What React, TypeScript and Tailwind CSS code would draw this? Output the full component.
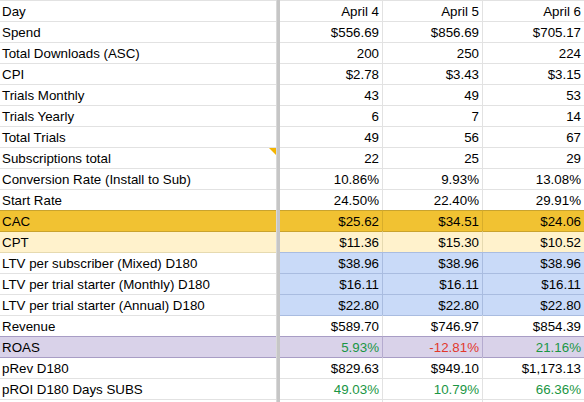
import React from 'react'

type Tone = 'cac' | 'cpt' | 'ltv' | 'roas' | null
type Row = { label: string; values: string[]; tone?: Tone; colors?: string[]; note?: boolean }

const rows: Row[] = [
  { label: 'Day', values: ['April 4', 'April 5', 'April 6'] },
  { label: 'Spend', values: ['$556.69', '$856.69', '$705.17'] },
  { label: 'Total Downloads (ASC)', values: ['200', '250', '224'] },
  { label: 'CPI', values: ['$2.78', '$3.43', '$3.15'] },
  { label: 'Trials Monthly', values: ['43', '49', '53'] },
  { label: 'Trials Yearly', values: ['6', '7', '14'] },
  { label: 'Total Trials', values: ['49', '56', '67'] },
  { label: 'Subscriptions total', values: ['22', '25', '29'], note: true },
  { label: 'Conversion Rate (Install to Sub)', values: ['10.86%', '9.93%', '13.08%'] },
  { label: 'Start Rate', values: ['24.50%', '22.40%', '29.91%'] },
  { label: 'CAC', values: ['$25.62', '$34.51', '$24.06'], tone: 'cac' },
  { label: 'CPT', values: ['$11.36', '$15.30', '$10.52'], tone: 'cpt' },
  { label: 'LTV per subscriber (Mixed) D180', values: ['$38.96', '$38.96', '$38.96'], tone: 'ltv' },
  { label: 'LTV per trial starter (Monthly) D180', values: ['$16.11', '$16.11', '$16.11'], tone: 'ltv' },
  { label: 'LTV per trial starter (Annual) D180', values: ['$22.80', '$22.80', '$22.80'], tone: 'ltv' },
  { label: 'Revenue', values: ['$589.70', '$746.97', '$854.39'] },
  { label: 'ROAS', values: ['5.93%', '-12.81%', '21.16%'], tone: 'roas', colors: ['text-[#1a9644]', 'text-[#e2382c]', 'text-[#1a9644]'] },
  { label: 'pRev D180', values: ['$829.63', '$949.10', '$1,173.13'] },
  { label: 'pROI D180 Days SUBS', values: ['49.03%', '10.79%', '66.36%'], colors: ['text-[#1a9644]', 'text-[#1a9644]', 'text-[#1a9644]'] },
]

const labelBg: Record<string, string> = {
  cac: 'bg-[#f1c232]',
  cpt: 'bg-[#fff2cc]',
  roas: 'bg-[#d9d2e9]',
}

const dataBg: Record<string, string> = {
  cac: 'bg-[#f1c232]',
  cpt: 'bg-[#fff2cc]',
  ltv: 'bg-[#c9daf8]',
  roas: 'bg-[#d9d2e9]',
}

const dataSide: Record<string, string> = {
  cac: 'border-r-[#d8ad2a]',
  cpt: 'border-r-[#e6dab0]',
  ltv: 'border-r-[#a9bce0]',
  roas: 'border-r-[#b5abcf]',
}

const colWidth = ['w-[103px] border-r', 'w-[100px] border-r', 'flex-1']

// top border colour of a row depends on it and the row above
function topBorder(row: Row, prev: Row | undefined, part: 'label' | 'data') {
  const t = row.tone ?? null
  const p = prev?.tone ?? null
  if (t === 'cac' || p === 'cac') return 'border-t-[#c9a32e]'
  if (t === 'roas' || p === 'roas') return 'border-t-[#a89dc5]'
  if (part === 'data' && (t === 'ltv' || p === 'ltv')) return 'border-t-[#a9bce0]'
  if (p === 'cpt') return 'border-t-[#e6dab0]'
  return 'border-t-[#e2e2e2]'
}

export default function App() {
  return (
    <div className="w-[584px] h-[402px] overflow-hidden bg-white text-[13.33px] text-black font-['Liberation_Sans',Arial,sans-serif]">
      {rows.map((row, i) => {
        const prev = rows[i - 1]
        const tone = row.tone ?? ''
        return (
          <div key={row.label} className="flex h-[21px]">
            <div
              className={`relative w-[276px] shrink-0 border-t pl-[2px] pt-[1px] leading-[19px] whitespace-nowrap ${topBorder(row, prev, 'label')} ${labelBg[tone] ?? 'bg-white'}`}
            >
              {row.label}
              {row.note && (
                <span className="absolute right-0 top-0 w-0 h-0 border-t-[7px] border-t-[#f4b400] border-l-[7px] border-l-transparent" />
              )}
            </div>
            <div className="w-[4px] shrink-0 bg-[#c6c6c6] border-l border-l-[#d9d9d9]" />
            {row.values.map((v, j) => (
              <div
                key={j}
                className={`${colWidth[j]} border-t pr-[3px] pt-[1px] leading-[19px] text-right whitespace-nowrap ${topBorder(row, prev, 'data')} ${dataSide[tone] ?? 'border-r-[#e2e2e2]'} ${dataBg[tone] ?? 'bg-white'} ${row.colors?.[j] ?? ''}`}
              >
                {v}
              </div>
            ))}
          </div>
        )
      })}
      <div className="flex h-[21px]">
        <div className="w-[276px] shrink-0 border-t border-t-[#e2e2e2]" />
        <div className="w-[4px] shrink-0 bg-[#c6c6c6] border-l border-l-[#d9d9d9]" />
        <div className="w-[103px] border-t border-r border-t-[#e2e2e2] border-r-[#e2e2e2]" />
        <div className="w-[100px] border-t border-r border-t-[#e2e2e2] border-r-[#e2e2e2]" />
        <div className="flex-1 border-t border-t-[#e2e2e2]" />
      </div>
    </div>
  )
}
